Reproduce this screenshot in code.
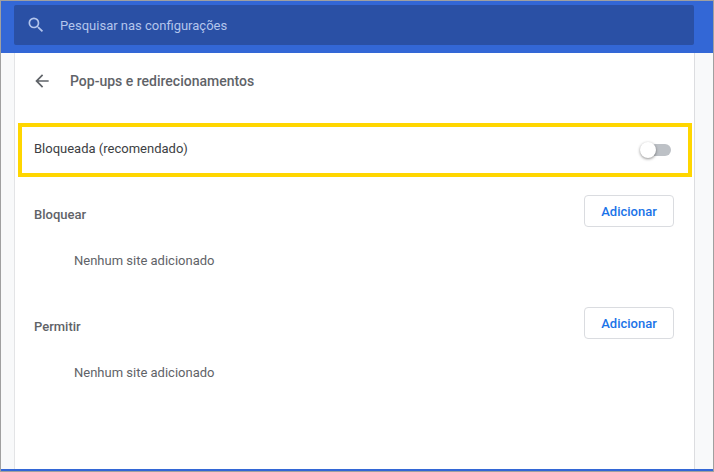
<div class="win">
  <header class="bar">
    <div class="search">
      <svg class="sicon" viewBox="0 0 24 24" width="20" height="20"><path fill="#b3c5ec" d="M15.5 14h-.79l-.28-.27A6.47 6.47 0 0 0 16 9.5 6.5 6.5 0 1 0 9.5 16c1.61 0 3.09-.59 4.23-1.57l.27.28v.79l5 4.99L20.49 19l-4.99-5zm-6 0C7.01 14 5 11.99 5 9.5S7.01 5 9.5 5 14 7.01 14 9.5 11.99 14 9.5 14z"/></svg>
      <span class="ph">Pesquisar nas configurações</span>
    </div>
  </header>
  <main class="page">
    <section class="card">
      <div class="title">
        <svg class="back" viewBox="0 0 24 24" width="20" height="20"><path fill="#5f6368" d="M20 11H7.83l5.59-5.59L12 4l-8 8 8 8 1.41-1.41L7.83 13H20v-2z"/></svg>
        <h1>Pop-ups e redirecionamentos</h1>
      </div>
      <div class="hl">
        <span class="lbl">Bloqueada (recomendado)</span>
        <span class="toggle"><span class="track"></span><span class="knob"></span></span>
      </div>
      <div class="head first"><h2>Bloquear</h2><button>Adicionar</button></div>
      <p class="empty">Nenhum site adicionado</p>
      <div class="head second"><h2>Permitir</h2><button>Adicionar</button></div>
      <p class="empty">Nenhum site adicionado</p>
    </section>
  </main>
  <div class="rule"></div>
</div>

<style>
  :global(body) { margin: 0; }
  .win { width: 714px; height: 472px; box-sizing: border-box; border: 1px solid #a0a0a0; display: flex; flex-direction: column; background: #f8f9fa; font-family: Roboto, "Liberation Sans", sans-serif; overflow: hidden; }
  .bar { height: 52px; flex: none; background: #3367d6; padding: 4px 19px 8px 13px; box-sizing: border-box; }
  .search { height: 40px; background: #2a50a5; border-radius: 2px; display: flex; align-items: center; padding-left: 12px; }
  .sicon { flex: none; }
  .ph { margin-left: 14px; font-size: 13px; color: #b3c5ec; }
  .page { flex: 1; min-height: 0; padding-left: 13px; padding-right: 18px; }
  .card { height: 100%; background: #fff; border-left: 1px solid #e3e4e6; border-right: 1px solid #dcdde0; box-sizing: border-box; position: relative; }
  .title { height: 56px; display: flex; align-items: center; padding-left: 17px; }
  .back { flex: none; }
  h1 { margin: 0 0 0 18px; font-size: 14px; font-weight: 500; color: #5f6368; }
  .hl { margin: 14px 0 0 3px; width: 674px; height: 54px; box-sizing: border-box; border: 4px solid #ffd600; display: flex; align-items: center; justify-content: space-between; padding: 0 17px 4px 12px; }
  .lbl { font-size: 13px; color: #3c4043; }
  .toggle { position: relative; width: 32px; height: 16px; display: block; margin-top: 4px; }
  .track { position: absolute; left: 2px; top: 2px; width: 30px; height: 12px; border-radius: 6px; background: #bdc1c6; }
  .knob { position: absolute; left: 1px; top: 0; width: 16px; height: 16px; border-radius: 50%; background: #fff; box-shadow: 0 1px 3px rgba(0,0,0,.45); }
  .head { display: flex; align-items: flex-start; justify-content: space-between; padding: 0 20px 0 19px; height: 32px; }
  .head.first { margin-top: 18px; }
  .head.second { margin-top: 38px; }
  h2 { margin: 12px 0 0; font-size: 13px; line-height: 16px; font-weight: 500; color: #5f6368; }
  button { width: 90px; height: 32px; box-sizing: border-box; background: #fff; border: 1px solid #dadce0; border-radius: 4px; color: #1a73e8; font: 500 13px Roboto, "Liberation Sans", sans-serif; padding: 0; }
  .empty { margin: 26px 0 0 59px; font-size: 13px; line-height: 16px; color: #5f6368; }
  .rule { height: 2px; flex: none; background: #3367d6; }
</style>
